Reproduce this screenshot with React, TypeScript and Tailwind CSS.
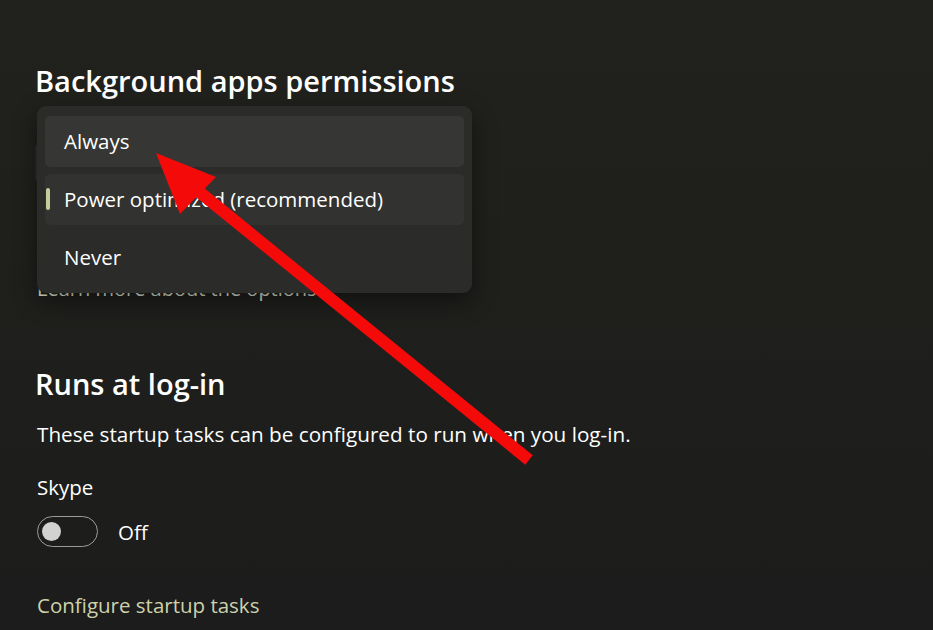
import React from 'react';

const font = { fontFamily: '"Open Sans", "Noto Sans", sans-serif' };

function Toggle() {
  return (
    <div className="flex items-center gap-5">
      <div className="flex h-[31px] w-[61px] items-center rounded-full border-[1.5px] border-[#9c9c9a] px-[4px]">
        <div className="h-[19px] w-[19px] rounded-full bg-[#d2d2d0]" />
      </div>
      <span className="text-[20.5px] leading-[26px] text-white">Off</span>
    </div>
  );
}

function Dropdown() {
  const items = ['Always', 'Power optimized (recommended)', 'Never'];
  return (
    <div className="absolute left-[37px] top-[106px] flex w-[435px] flex-col gap-[7px] rounded-[9px] bg-[#2b2b29] px-[8px] py-[10px] shadow-[0_8px_24px_rgba(0,0,0,0.45)]">
      {items.map((label, i) => (
        <div
          key={label}
          className={
            'relative flex h-[51px] items-center rounded-[5px] pl-[19px] text-[20.5px] text-white ' +
            (i === 0 ? 'bg-[#363634]' : i === 1 ? 'bg-[#323230]' : '')
          }
        >
          {i === 1 && (
            <span className="absolute left-[1px] top-[14px] h-[22px] w-[4px] rounded-full bg-[#c4cc9a]" />
          )}
          {label}
        </div>
      ))}
    </div>
  );
}

function Arrow() {
  return (
    <svg className="pointer-events-none absolute left-0 top-0" width="933" height="630">
      <line x1="192" y1="186" x2="529" y2="460" stroke="#f50a0a" strokeWidth="12" strokeLinecap="butt" />
      <polygon points="156,153 216,177 180,214" fill="#f50a0a" />
    </svg>
  );
}

export default function App() {
  return (
    <div
      className="relative h-[630px] w-[933px] overflow-hidden bg-[linear-gradient(180deg,#21221d_0%,#1f201c_40%,#1c1c1c_100%)]"
      style={font}
    >
      <div className="flex flex-col px-[35px] pt-[63px]">
        <h2 className="text-[29px] font-semibold leading-[36px] text-white">Background apps permissions</h2>
        <div className="mt-[44px] h-[40px] w-[320px] rounded-[5px] bg-[#2d2d2b]" />
        <span className="mt-[93px] pl-[2px] text-[20px] leading-[26px] text-[#dfe2d2]">Learn more about the options</span>

        <h2 className="mt-[64px] text-[29px] font-semibold leading-[36px] text-white">Runs at log-in</h2>
        <p className="mt-[19px] pl-[2px] text-[20.7px] leading-[26px] text-white">
          These startup tasks can be configured to run when you log-in.
        </p>
        <span className="mt-[27px] pl-[2px] text-[20.5px] leading-[26px] text-white">Skype</span>
        <div className="mt-[16px] pl-[2px]">
          <Toggle />
        </div>
        <span className="mt-[45px] pl-[2px] text-[20.5px] leading-[26px] text-[#cdd2ab]">Configure startup tasks</span>
      </div>
      <Dropdown />
      <Arrow />
    </div>
  );
}
